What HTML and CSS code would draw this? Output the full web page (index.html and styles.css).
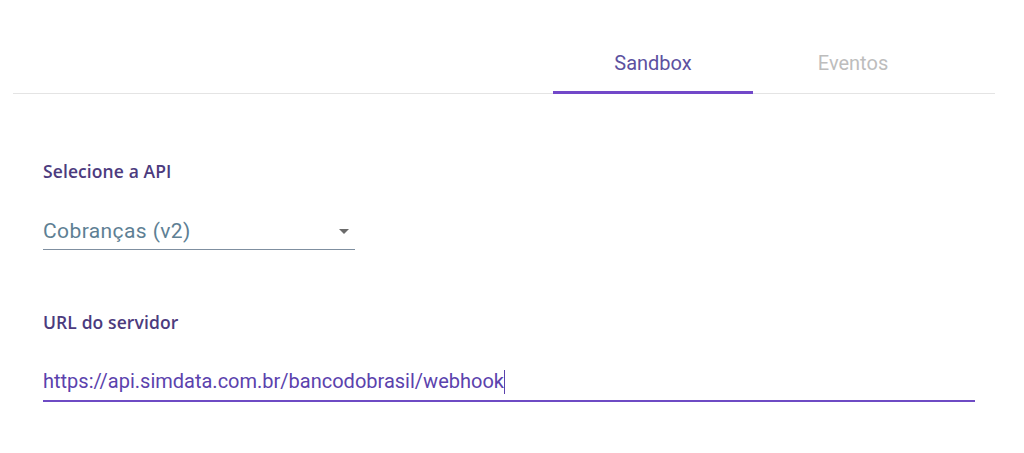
FILE: index.html
```html
<!DOCTYPE html>
<html lang="pt-BR">
<head>
<meta charset="utf-8">
<title>Sandbox</title>
<link rel="stylesheet" href="styles.css">
</head>
<body>
<div class="page">
  <nav class="tabs">
    <div class="tab-list">
      <div class="tab active">Sandbox</div>
      <div class="tab">Eventos</div>
    </div>
  </nav>
  <section class="form">
    <div class="field">
      <label class="label">Selecione a API</label>
      <div class="select">
        <span class="select-value">Cobranças (v2)</span>
        <span class="caret"></span>
      </div>
    </div>
    <div class="field second">
      <label class="label">URL do servidor</label>
      <div class="input">https://api.simdata.com.br/bancodobrasil/webhook<span class="cursor"></span></div>
    </div>
  </section>
</div>
</body>
</html>
```

FILE: styles.css
```css
* { box-sizing: border-box; }
html, body { margin: 0; background: #fff; }
body { font-family: Roboto, "Noto Sans", sans-serif; }
.page { padding: 0 29px 0 13px; }
.tabs {
  border-bottom: 1px solid #e4e4e4;
  display: flex;
  justify-content: flex-end;
  padding-right: 42px;
}
.tab-list { display: flex; }
.tab {
  width: 200px;
  height: 94px;
  padding-top: 51px;
  text-align: center;
  font-size: 20px;
  color: #bdbdbd;
  line-height: 24px;
  border-bottom: 3px solid transparent;
  margin-bottom: -1px;
}
.tab.active { color: #5d51a0; border-bottom-color: #7248c9; }
.form { padding: 65px 0 0 30px; }
.field { display: flex; flex-direction: column; }
.field.second { margin-top: 60px; }
.label {
  font-family: "Open Sans", sans-serif;
  font-weight: 600;
  font-size: 17.5px;
  letter-spacing: 0.1px;
  color: #4c3b7e;
  line-height: 24px;
}
.select {
  margin-top: 37px;
  width: 312px;
  height: 30px;
  display: flex;
  align-items: flex-start;
  justify-content: space-between;
  border-bottom: 1px solid #7f8fa0;
  padding: 0 6px 0 0;
}
.select-value { font-size: 21px; letter-spacing: 0.4px; color: #5e7f94; line-height: 22px; }
.caret {
  margin-top: 9px;
  width: 0; height: 0;
  border-left: 5px solid transparent;
  border-right: 5px solid transparent;
  border-top: 5px solid #6b6b6b;
}
.input {
  margin-top: 36px;
  width: 932px;
  height: 32px;
  font-size: 20px;
  color: #5b42ad;
  line-height: 22px;
  border-bottom: 2px solid #6e4bc4;
  display: flex;
  align-items: flex-start;
}
.cursor { display: inline-block; width: 1px; height: 24px; background: #5b42ad; }
```
